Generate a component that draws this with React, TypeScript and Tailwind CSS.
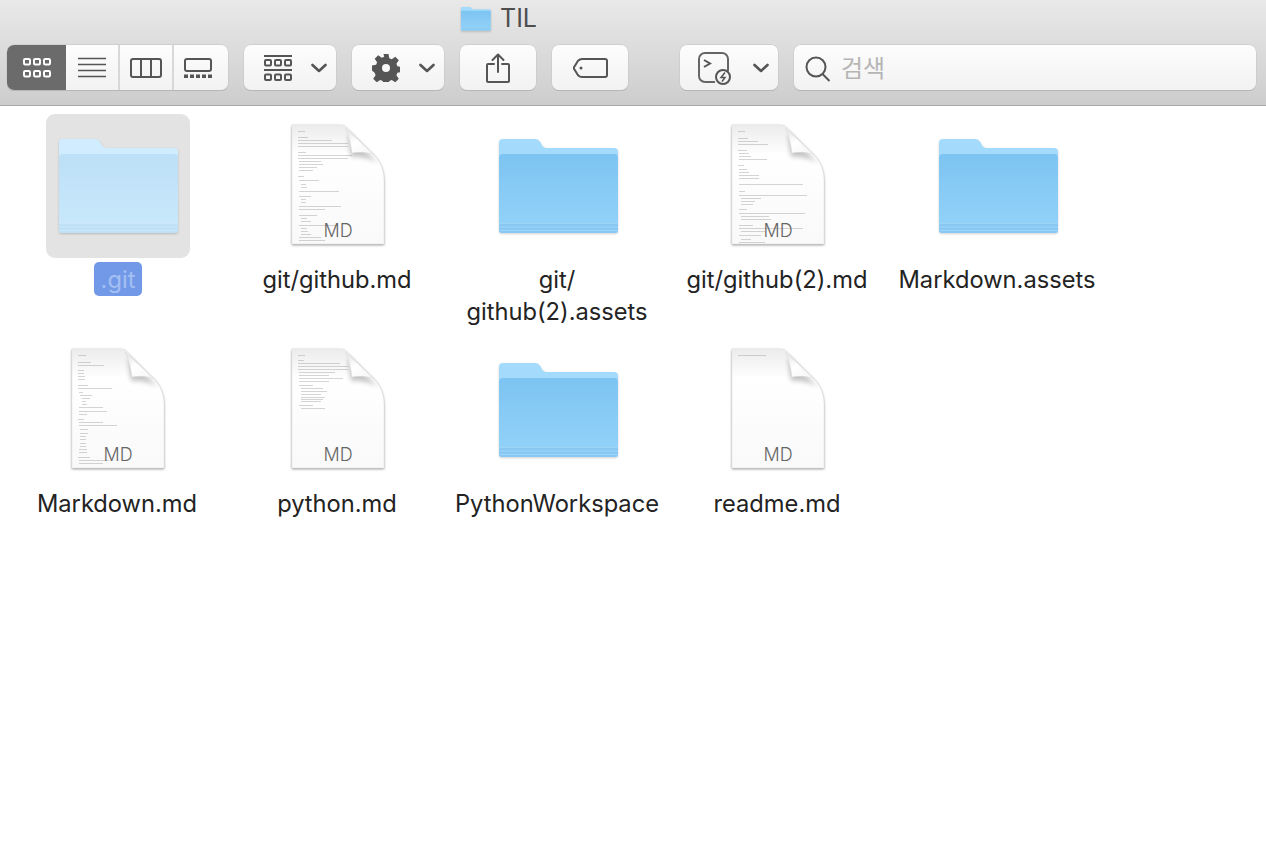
import React from "react";

const uiFont = "font-['Inter','Noto_Sans_CJK_KR',sans-serif]";

type Line = [number, number, number];

// thumbnail text of each document: x, y, width
const githubLines: Line[] = [
  [6, 6, 7], [6, 12, 10], [6, 15, 34], [6, 18, 50], [6, 21, 50], [6, 27, 8], [6, 30, 54], [6, 33, 50], [7, 36, 22], [7, 39, 24], [7, 42, 18], [7, 45, 14],
  [6, 51, 6], [7, 55, 20], [9, 59, 5], [9, 62, 6], [7, 66, 40], [7, 71, 12], [9, 74, 5], [9, 77, 5], [7, 81, 42], [7, 84, 26], [7, 90, 18], [9, 93, 6], [9, 96, 10], [7, 100, 38],
  [9, 103, 6], [9, 106, 7], [9, 109, 10], [7, 112, 22], [7, 115, 26],
];
const github2Lines: Line[] = [
  [6, 6, 7], [6, 13, 10], [6, 16, 20], [6, 19, 30], [6, 25, 9], [7, 28, 10], [7, 31, 12], [7, 34, 28], [6, 40, 6], [7, 44, 8], [7, 47, 10], [7, 50, 20], [7, 53, 20], [7, 59, 64], [7, 66, 6],
  [7, 70, 68], [9, 73, 20], [9, 76, 14], [9, 79, 12], [7, 84, 8], [7, 88, 66], [9, 91, 28], [9, 94, 30], [7, 100, 14], [7, 103, 64], [9, 106, 24], [7, 110, 22],
  [9, 114, 10], [7, 117, 26],
];
const markdownLines: Line[] = [
  [6, 6, 8], [6, 13, 13], [6, 16, 26], [6, 21, 6], [6, 24, 6], [6, 27, 7], [6, 30, 7], [6, 36, 10], [6, 39, 34], [7, 43, 4], [8, 46, 12], [10, 49, 8], [10, 52, 4], [10, 55, 5], [7, 58, 24],
  [7, 62, 28], [7, 65, 8], [6, 70, 6], [7, 73, 24], [7, 76, 38], [8, 80, 8], [8, 84, 8], [8, 87, 6], [8, 90, 6], [8, 94, 6], [8, 97, 6], [7, 100, 8], [7, 103, 8], [6, 108, 12], [7, 111, 30], [7, 114, 24],
];
const pythonLines: Line[] = [
  [6, 6, 7], [6, 11, 6], [6, 14, 42], [6, 17, 50], [6, 20, 50], [7, 23, 36], [7, 26, 30], [7, 29, 44], [7, 32, 30], [7, 36, 14], [9, 39, 22], [9, 42, 26], [9, 45, 20], [9, 48, 24], [9, 50, 22], [9, 52, 20], [7, 56, 14], [9, 59, 24],
];
const readmeLines: Line[] = [[6, 6, 28]];

function FolderIcon({ id, faded = false, w = 120, h = 96 }: { id: string; faded?: boolean; w?: number; h?: number }) {
  const back = faded ? "#d0ecfe" : "#a4dbfd";
  const top = faded ? "#bde0f7" : "#7dc4f2";
  const bottom = faded ? "#c9e8fb" : "#94d3f9";
  const stripe = faded ? "#bfe1f7" : "#88c8f2";
  const line = faded ? "#cde8fa" : "#9ed4f6";
  return (
    <svg width={w} height={h} viewBox="0 0 120 96" className="drop-shadow-[0_1px_1px_rgba(0,0,0,0.18)]">
      <defs>
        <linearGradient id={id} x1="0" y1="0" x2="0" y2="1">
          <stop offset="0" stopColor={top} />
          <stop offset="1" stopColor={bottom} />
        </linearGradient>
      </defs>
      <path d="M0 4a4 4 0 0 1 4-4h31c4 0 6 2 7 4.500S45 9 48 9h67a4 4 0 0 1 4 4v20H0z" fill={back} />
      <path d="M0 19a4 4 0 0 1 4-4h111a4 4 0 0 1 4 4v72a3 3 0 0 1-3 3H3a3 3 0 0 1-3-3z" fill={`url(#${id})`} />
      <path d="M0 84h119v7a3 3 0 0 1-3 3H3a3 3 0 0 1-3-3z" fill={stripe} />
      <rect x="0" y="84" width="119" height="1" fill={line} />
      <rect x="0" y="87.500" width="119" height="1" fill={line} />
      <rect x="0" y="91" width="119" height="1" fill={line} />
    </svg>
  );
}

function DocIcon({ id, lines }: { id: string; lines: Line[] }) {
  return (
    <div className="relative w-[92px] h-[122px]">
      <svg width="92" height="122" viewBox="0 0 92 122" className="overflow-visible drop-shadow-[0_1px_1px_rgba(0,0,0,0.4)]">
        <defs>
          <linearGradient id={id} x1="0" y1="0" x2="0" y2="1">
            <stop offset="0" stopColor="#ececec" />
            <stop offset="0.25" stopColor="#ffffff" />
            <stop offset="1" stopColor="#f9f9f9" />
          </linearGradient>
          <linearGradient id={`${id}-fold`} x1="0" y1="0" x2="0.8" y2="1">
            <stop offset="0" stopColor="#e0e0e0" />
            <stop offset="0.5" stopColor="#ffffff" />
            <stop offset="1" stopColor="#f7f7f7" />
          </linearGradient>
          <filter id={`${id}-soft`} x="-20%" y="-20%" width="140%" height="140%">
            <feGaussianBlur stdDeviation="0.35" />
          </filter>
          <filter id={`${id}-blur`} x="-40%" y="-40%" width="180%" height="180%">
            <feGaussianBlur stdDeviation="2.500" />
          </filter>
        </defs>
        <path d="M0 0H50C54 1 57 5 60 8L80 28C88 35 92 45 92 55V119H0z" fill={`url(#${id})`} stroke="#e2e2e2" strokeWidth="0.5" />
        <g filter={`url(#${id}-soft)`}>
          {lines.map(([x, y, w], i) => (
            <rect key={i} x={x} y={y} width={w} height="0.7" fill="#888" opacity="0.5" />
          ))}
        </g>
        <path d="M56 8L59 32C66 31 76 32 86 38z" fill="#000" opacity="0.24" filter={`url(#${id}-blur)`} />
        <path d="M53 3C57 10 59 20 60 28C66 27 74 27 81 29z" fill={`url(#${id}-fold)`} stroke="#d8d8d8" strokeWidth="0.4" />
      </svg>
      <span className={`absolute inset-x-0 top-[96px] text-center text-[18px] font-light leading-[20px] text-[#666] ${uiFont}`}>MD</span>
    </div>
  );
}

function ToolButton({ width, pad = "justify-center", children }: { width: string; pad?: string; children: React.ReactNode }) {
  return (
    <div className={`${width} ${pad} h-[45px] flex items-center rounded-[7px] bg-gradient-to-b from-[#fdfdfd] to-[#f2f2f2] shadow-[0_0_0_0.5px_#c4c4c4,0_1px_0_#a9a9a9]`}>
      {children}
    </div>
  );
}

function Chevron() {
  return (
    <svg width="16" height="10" viewBox="0 0 16 10" fill="none" stroke="#555" strokeWidth="2.600" strokeLinecap="round" strokeLinejoin="round">
      <path d="M1.500 2l6.500 6 6.500-6" />
    </svg>
  );
}

function GridGlyph({ color }: { color: string }) {
  return (
    <svg width="28" height="20" viewBox="0 0 28 20" fill="none" stroke={color} strokeWidth="2">
      {[1, 11, 21].map((x) => (
        <React.Fragment key={x}>
          <rect x={x} y="1" width="6" height="5.500" rx="1.200" />
          <rect x={x} y="13" width="6" height="5.500" rx="1.200" />
        </React.Fragment>
      ))}
    </svg>
  );
}

function ViewSwitcher() {
  return (
    <div className="flex w-[221px] h-[45px] rounded-[7px] bg-gradient-to-b from-[#fdfdfd] to-[#f2f2f2] shadow-[0_0_0_0.5px_#c4c4c4,0_1px_0_#a9a9a9] overflow-hidden">
      <div className="w-[59px] flex items-center justify-center bg-[#6b6b6b]">
        <GridGlyph color="#ffffff" />
      </div>
      <div className="w-[52px] flex items-center justify-center">
        <svg width="28" height="21" viewBox="0 0 28 21" stroke="#555" strokeWidth="1.600">
          <path d="M0 1.500h28M0 7.500h28M0 13.500h28M0 19.500h28" />
        </svg>
      </div>
      <div className="w-[2px] bg-[#d8d8d8]" />
      <div className="w-[52px] flex items-center justify-center">
        <svg width="32" height="20" viewBox="0 0 32 20" fill="none" stroke="#555" strokeWidth="2">
          <rect x="1" y="1" width="30" height="18" rx="2" />
          <path d="M11 1v18M21 1v18" />
        </svg>
      </div>
      <div className="w-[2px] bg-[#d8d8d8]" />
      <div className="flex-1 flex items-center justify-center pr-[6px]">
        <svg width="28" height="20" viewBox="0 0 28 20">
          <rect x="1" y="1" width="26" height="12" rx="2" fill="none" stroke="#555" strokeWidth="2" />
          {[0, 6, 12, 18, 24].map((x) => (
            <rect key={x} x={x} y="16.500" width="4" height="3.500" fill="#555" />
          ))}
        </svg>
      </div>
    </div>
  );
}

function Toolbar() {
  return (
    <div className="h-[106px] border-b border-[#a9a9a9] bg-gradient-to-b from-[#e9e9e9] to-[#cdcdcd]">
      <div className="h-[37px] mb-[8px] flex items-center pl-[461px] gap-[9px]">
        <FolderIcon id="title-folder" w={30} h={24} />
        <span className={`text-[25px] leading-none text-[#4e4e4e] ${uiFont}`}>TIL</span>
      </div>
      <div className="flex gap-[16px] pl-[7px] pr-[10px]">
        <ViewSwitcher />
        <ToolButton width="w-[92px]" pad="pl-[20px] gap-[19px]">
          <svg width="28" height="26" viewBox="0 0 28 26" fill="none" stroke="#555" strokeWidth="2">
            <path d="M0 1h28M0 15h28" />
            <rect x="1" y="5" width="6" height="5.500" rx="1" />
            <rect x="11" y="5" width="6" height="5.500" rx="1" />
            <rect x="21" y="5" width="6" height="5.500" rx="1" />
            <rect x="1" y="19.500" width="6" height="5.500" rx="1" />
            <rect x="11" y="19.500" width="6" height="5.500" rx="1" />
            <rect x="21" y="19.500" width="6" height="5.500" rx="1" />
          </svg>
          <Chevron />
        </ToolButton>
        <ToolButton width="w-[92px]" pad="pl-[20px] gap-[19px]">
          <svg width="28" height="28" viewBox="0 0 28 28" fill="#555">
            <path
              fillRule="evenodd"
              d="M11.500 0h5l.8 4.200 2.500 1 3.500-2.400 3.500 3.500-2.400 3.500 1 2.500 4.100.7v5l-4.100.8-1 2.500 2.400 3.500-3.500 3.500-3.500-2.400-2.500 1-.8 4.100h-5l-.8-4.100-2.500-1-3.500 2.400-3.500-3.500 2.400-3.500-1-2.500L0 16.500v-5l4.100-.7 1-2.500-2.400-3.500 3.500-3.500 3.500 2.400 2.500-1zM14 10a4 4 0 1 0 0 8 4 4 0 0 0 0-8z"
            />
          </svg>
          <Chevron />
        </ToolButton>
        <ToolButton width="w-[76px]">
          <svg width="24" height="30" viewBox="0 0 24 30" fill="none" stroke="#555" strokeWidth="2" strokeLinecap="round" strokeLinejoin="round">
            <path d="M12 19V2M6.500 7L12 1.500 17.500 7" />
            <path d="M8 11H2a1 1 0 0 0-1 1v16a1 1 0 0 0 1 1h20a1 1 0 0 0 1-1V12a1 1 0 0 0-1-1h-6" />
          </svg>
        </ToolButton>
        <ToolButton width="w-[76px]">
          <svg width="35" height="20" viewBox="0 0 35 20" fill="none" stroke="#555" strokeWidth="2" strokeLinejoin="round">
            <path d="M9 1h23a2 2 0 0 1 2 2v14a2 2 0 0 1-2 2H9c-2 0-3-.8-4-1.800L1.500 11.500a2 2 0 0 1 0-3L5 2.800C6 1.800 7 1 9 1z" />
            <circle cx="8" cy="10" r="1.500" fill="#555" stroke="none" />
          </svg>
        </ToolButton>
        <div className="w-[20px]" />
        <ToolButton width="w-[98px]" pad="pl-[17px] gap-[22px]">
          <svg width="34" height="33" viewBox="0 0 34 33" fill="none" stroke="#666" strokeWidth="2" className="mt-[2px]">
            <path d="M18 30H8a6 6 0 0 1-6-6V7a6 6 0 0 1 6-6h17a6 6 0 0 1 6 6v12" />
            <path d="M7 8l6 3.500-6 3.500" stroke="#555" />
            <circle cx="26" cy="25" r="7" stroke="#555" />
            <path d="M28 20.500l-4 5h4l-3 4" stroke="#555" strokeWidth="1.500" />
          </svg>
          <Chevron />
        </ToolButton>
        <div className="flex-1 h-[45px] flex items-center gap-[10px] pl-[11px] rounded-[7px] bg-gradient-to-b from-[#fdfdfd] to-[#f2f2f2] shadow-[0_0_0_0.5px_#c4c4c4,0_1px_0_#a9a9a9]">
          <svg width="26" height="26" viewBox="0 0 26 26" fill="none" stroke="#555" strokeWidth="2" className="mt-[2px]">
            <circle cx="11" cy="11" r="9.500" />
            <path d="M17.500 18l7 7" />
          </svg>
          <span className={`mt-[3px] text-[24px] leading-none text-[#b5b5b5] ${uiFont}`}>검색</span>
        </div>
      </div>
    </div>
  );
}

function Item({ label, selected, children }: { label: React.ReactNode; selected?: boolean; children: React.ReactNode }) {
  return (
    <div className="w-[220px] h-[224px] flex flex-col items-center">
      <div className={`ml-[2px] w-[144px] h-[144px] flex items-center justify-center rounded-[9px] ${selected ? "bg-[#e3e3e3]" : ""}`}>
        {children}
      </div>
      <div
        className={`mt-[4px] pt-[2px] text-center text-[23.7px] leading-[32px] ${uiFont} ${
          selected ? "ml-[2px] px-[7px] h-[34px] rounded-[5px] bg-[#7299e8] text-[#a4bff2]" : "text-[#232323]"
        }`}
      >
        {label}
      </div>
    </div>
  );
}

function Folder({ id, faded }: { id: string; faded?: boolean }) {
  return (
    <div className="ml-[2px] mt-[2px]">
      <FolderIcon id={id} faded={faded} />
    </div>
  );
}

export default function App() {
  return (
    <div className="w-[1266px] h-[862px] bg-white overflow-hidden">
      <Toolbar />
      <div className="grid grid-cols-[repeat(5,220px)] pl-[7px] pt-[8px]">
        <Item label=".git" selected>
          <Folder id="folder-git" faded />
        </Item>
        <Item label="git/github.md">
          <DocIcon id="doc-1" lines={githubLines} />
        </Item>
        <Item label={<>git/<br />github(2).assets</>}>
          <Folder id="folder-assets" />
        </Item>
        <Item label="git/github(2).md">
          <DocIcon id="doc-2" lines={github2Lines} />
        </Item>
        <Item label="Markdown.assets">
          <Folder id="folder-md" />
        </Item>
        <Item label="Markdown.md">
          <DocIcon id="doc-3" lines={markdownLines} />
        </Item>
        <Item label="python.md">
          <DocIcon id="doc-4" lines={pythonLines} />
        </Item>
        <Item label="PythonWorkspace">
          <Folder id="folder-py" />
        </Item>
        <Item label="readme.md">
          <DocIcon id="doc-5" lines={readmeLines} />
        </Item>
      </div>
    </div>
  );
}
